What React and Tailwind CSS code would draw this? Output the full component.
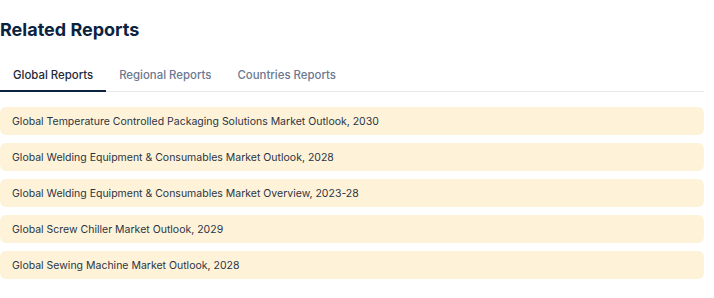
const tabs = ["Global Reports", "Regional Reports", "Countries Reports"];

const reports = [
  "Global Temperature Controlled Packaging Solutions Market Outlook, 2030",
  "Global Welding Equipment & Consumables Market Outlook, 2028",
  "Global Welding Equipment & Consumables Market Overview, 2023-28",
  "Global Screw Chiller Market Outlook, 2029",
  "Global Sewing Machine Market Outlook, 2028",
];

export default function App() {
  return (
    <div className="min-h-screen bg-white font-['Inter',sans-serif]">
      <div className="w-[704px] pt-4">
        <h2 className="text-[18px] leading-7 font-bold text-[#0b2340]">
          Related Reports
        </h2>

        {/* Tabs */}
        <div className="mt-3 flex border-b border-[#e5e7eb]">
          {tabs.map((tab, i) => (
            <button
              key={tab}
              className={`-mb-px px-[13px] pt-[11px] pb-[7px] text-[11.4px] leading-4 font-medium ${
                i === 0
                  ? "border-b-2 border-[#0b2340] text-[#1f2937]"
                  : "border-b-2 border-transparent text-[#6b7890]"
              }`}
            >
              {tab}
            </button>
          ))}
        </div>

        {/* Report list */}
        <div className="mt-[15px] flex flex-col gap-2">
          {reports.map((title) => (
            <div
              key={title}
              className="flex h-7 items-center rounded-md bg-[#fef3d8] px-3 pt-px text-[10.5px] text-[#2b3445]"
            >
              {title}
            </div>
          ))}
        </div>
      </div>
    </div>
  );
}
